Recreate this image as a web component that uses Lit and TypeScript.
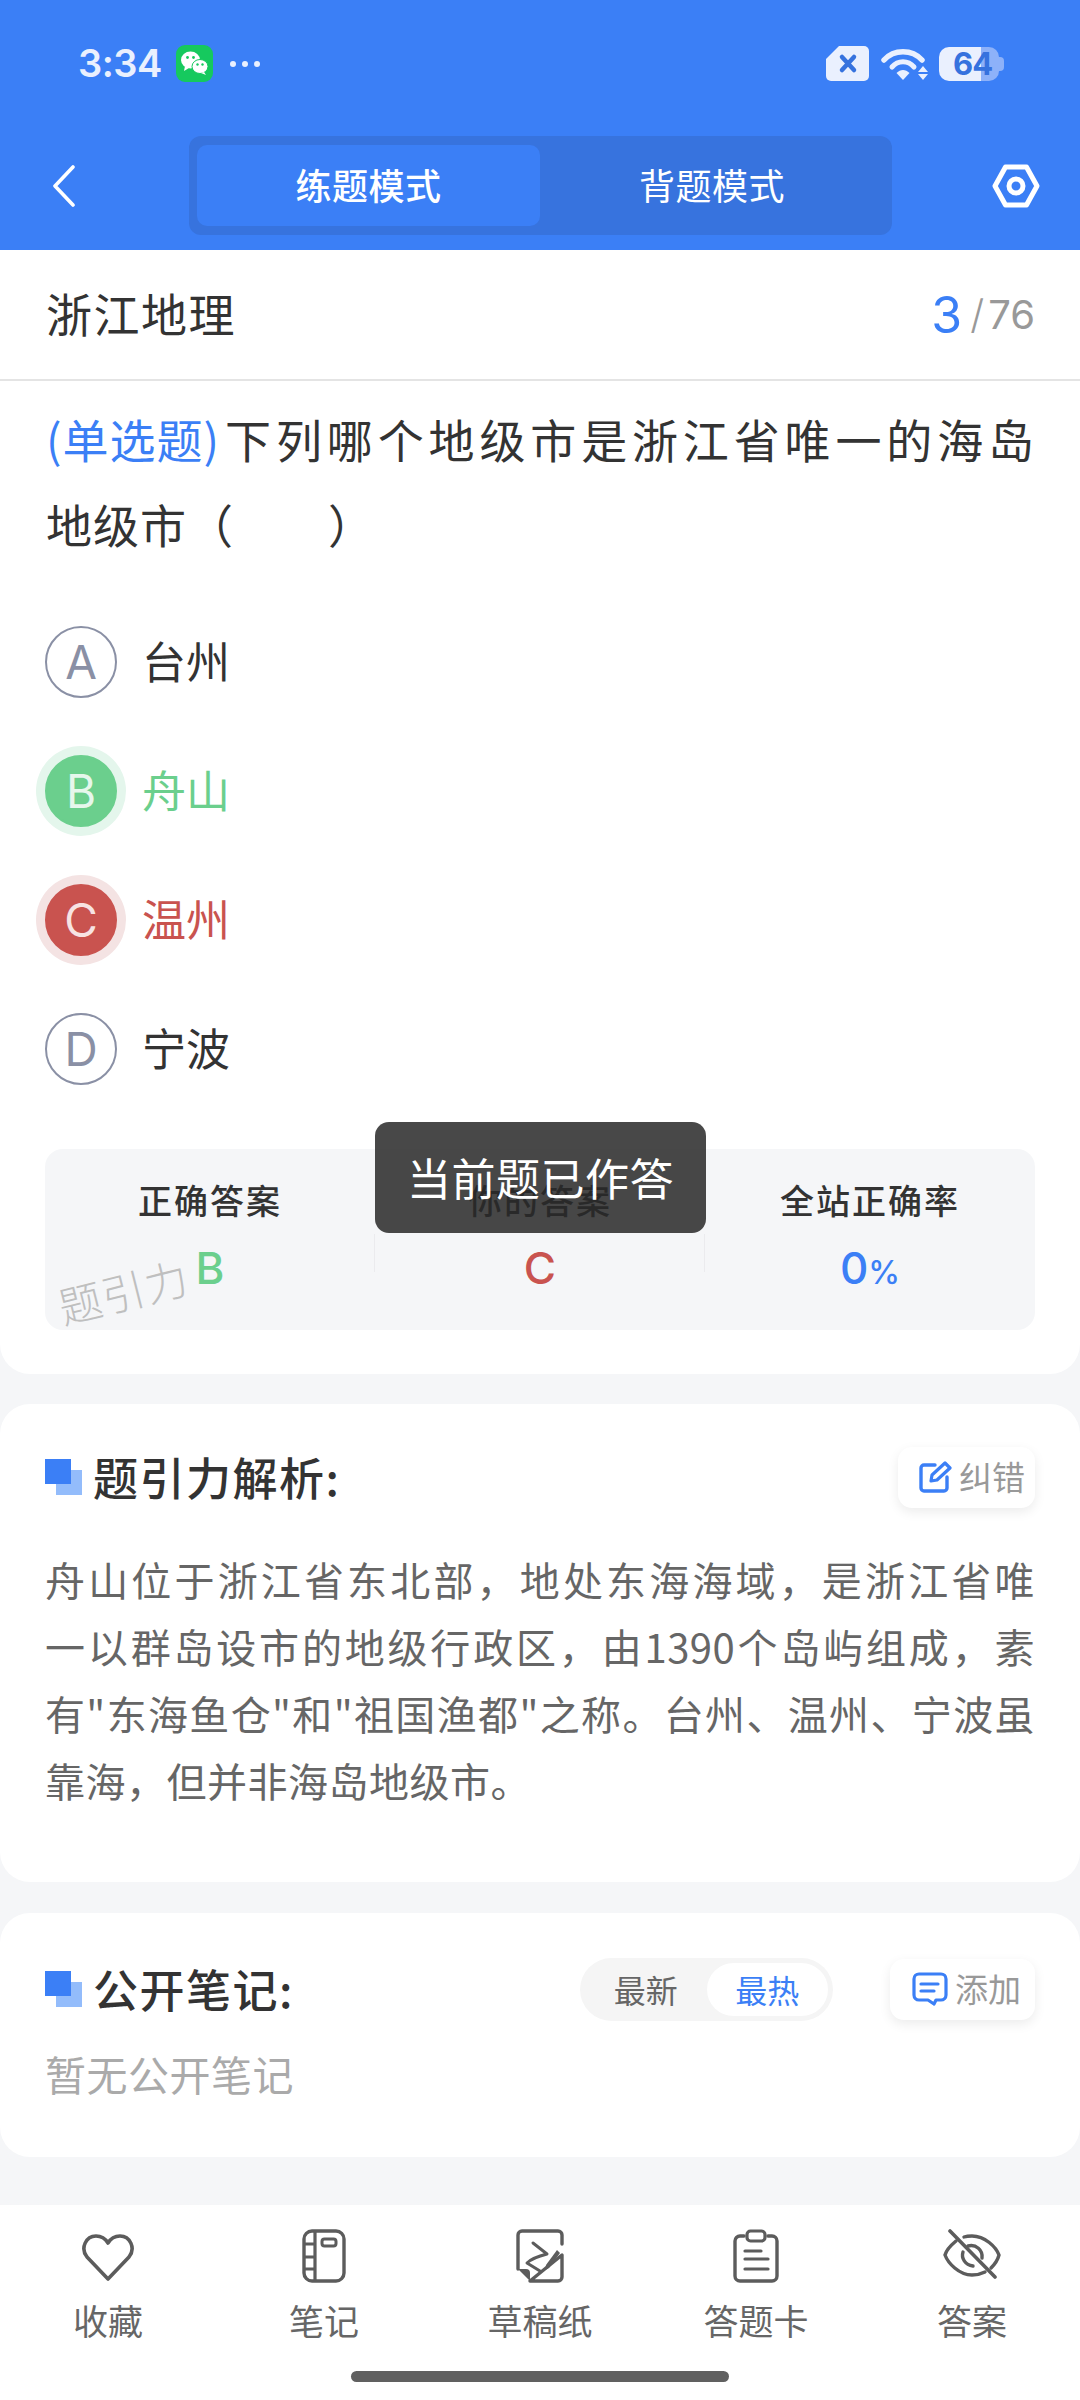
import { LitElement, html, css } from "lit";
import { customElement } from "lit/decorators.js";

const EXP = [
  "舟山位于浙江省东北部，地处东海海域，是浙江省唯",
  "一以群岛设市的地级行政区，由1390个岛屿组成，素",
  '有"东海鱼仓"和"祖国渔都"之称。台州、温州、宁波虽',
];

@customElement("app-root")
export class AppRoot extends LitElement {
  static styles = css`
    :host { display: block; width: 1080px; height: 2400px; font-family: "Noto Sans CJK SC", Inter, sans-serif; color: #333; }
    * { box-sizing: border-box; }
    .page { position: relative; width: 1080px; height: 2400px; background: #f5f6f8; display: flex; flex-direction: column; overflow: hidden; }
    .head { background: #3b7ff6; height: 250px; flex: none; }
    .status { height: 136px; padding: 45px 76px 0 78px; display: flex; justify-content: space-between; align-items: flex-start; color: #eaf0fe; }
    .st-l, .st-r { display: flex; align-items: center; height: 37px; }
    .time { font: 600 38px/37px Inter, sans-serif; width: 98px; letter-spacing: -0.5px; }
    .dots { display: flex; gap: 6px; margin-left: 17px; }
    .dots i { width: 6px; height: 6px; border-radius: 50%; background: #eaf0fe; }
    .wifi { margin: 0 11px 0 12px; }
    .batt { position: relative; width: 65px; height: 34px; display: flex; }
    .batt .fill { width: 42px; background: #eaf0fe; border-radius: 10px 0 0 10px; }
    .batt .rest { width: 18px; background: #8db1f9; border-radius: 0 10px 10px 0; }
    .batt .nub { width: 5px; height: 14px; margin-top: 10px; background: #8db1f9; border-radius: 0 4px 4px 0; }
    .batt span { position: absolute; left: 14px; top: 0; font: 700 31px/34px Inter, sans-serif; color: #3672de; letter-spacing: -1px; }
    .nav { height: 114px; display: flex; align-items: flex-start; padding: 0 40px 0 52px; }
    .back { margin-top: 29px; }
    .tabs { width: 703px; height: 99px; margin-left: 113px; background: #3773de; border-radius: 12px; padding: 9px 8px; display: flex; }
    .tab { width: 343px; height: 81px; border-radius: 10px; display: flex; align-items: center; justify-content: center; color: #fff; font-size: 36px; font-weight: 500; letter-spacing: 0.5px; padding-bottom: 4px; }
    .tab.on { background: #3b7ff6; }
    .tab.off { font-weight: 400; width: 344px; }
    .gear { margin: 28px 0 0 auto; }

    .card { background: #fff; border-radius: 30px; flex: none; }
    .main { border-radius: 0 0 30px 30px; height: 1124px; }
    .title-row { height: 131px; border-bottom: 2px solid #e4e4e4; padding: 0 45px 0 46px; display: flex; align-items: center; justify-content: space-between; }
    .title { font-size: 46px; line-height: 60px; letter-spacing: 1.5px; margin-top: -6px; }
    .count { display: flex; align-items: center; color: #999; font: 400 40px/50px Inter, sans-serif; margin-top: 0; }
    .count b { font-weight: 400; font-size: 50px; color: #3b7ff6; margin-right: 8px; }
    .count i { font-style: normal; margin-right: 4px; font-weight: 300; }
    .q { padding: 15px 45px 0 46px; font-size: 46px; line-height: 85px; letter-spacing: 1px; }
    .q .first { display: flex; }
    .q .first span { flex: none; color: #3b7ff6; letter-spacing: 1px; margin-right: 5px; }
    .q .first div { flex: 1; text-align: justify; text-align-last: justify; }
    .opts { margin-top: 31px; padding-left: 45px; }
    .opt { height: 129px; display: flex; align-items: center; font-size: 44px; gap: 25px; color: #333; }
    .opt span { padding-bottom: 4px; }
    .dot { width: 72px; height: 72px; border-radius: 50%; border: 2px solid #8a90a5; color: #8a90a5; display: flex; align-items: center; justify-content: center; font: 400 46px/1 Inter, sans-serif; flex: none; }
    .opt.ok { color: #6bcf8d; }
    .opt.ok .dot { background: #6bcf8d; border-color: #6bcf8d; color: #e6f7ec; box-shadow: 0 0 0 9px #e4f6ec; }
    .opt.bad { color: #c9534f; }
    .opt.bad .dot { background: #c9534f; border-color: #c9534f; color: #f7e3e3; box-shadow: 0 0 0 9px #f4e3e3; }
    .stats { position: relative; margin: 36px 45px 0; height: 181px; background: #f5f6f8; border-radius: 18px; display: flex; }
    .stat { flex: 1; text-align: center; position: relative; padding-top: 29px; }
    .stat + .stat::before { content: ""; position: absolute; left: -1px; top: 85px; height: 38px; width: 1px; background: #ebebee; }
    .stat .l { font-size: 34px; font-weight: 500; line-height: 44px; letter-spacing: 2px; color: #333; }
    .stat .v { font: 500 44px/50px Inter, sans-serif; margin-top: 21px; }
    .v small { font-size: 32px; font-weight: 500; }
    .g { color: #6bcf8d; } .r { color: #c9534f; } .b { color: #3b7ff6; }
    .mark { position: absolute; left: 12px; top: 116px; font-size: 43px; line-height: 50px; color: #bfbfbf; transform: rotate(-14deg); letter-spacing: 1px; font-weight: 300; }

    .sec { padding: 42px 45px 0; }
    .exp { margin-top: 30px; height: 478px; }
    .notes { margin-top: 31px; height: 244px; padding-top: 45px; }
    .sec-h { display: flex; align-items: center; height: 62px; }
    .sq { position: relative; width: 37px; height: 36px; flex: none; margin-right: 11px; }
    .sq i { position: absolute; display: block; width: 26px; height: 25px; }
    .sq i:first-child { left: 11px; top: 11px; background: #93bcfb; }
    .sq i:last-child { left: 0; top: 0; background: #3b7ff6; }
    .sec-t { font-size: 45px; font-weight: 500; line-height: 60px; letter-spacing: 1.5px; flex: 1; color: #333; }
    .btn { height: 61px; background: #fff; border-radius: 14px; box-shadow: 0 4px 12px rgba(0,0,0,.08); display: flex; align-items: center; gap: 7px; color: #999; font-size: 33px; padding: 0 10px 3px 20px; }
    .btn svg { margin-top: 3px; }
    .btn.fix { width: 137px; }
    .btn.add { width: 145px; padding-left: 22px; }
    .seg { width: 253px; height: 63px; background: #f5f5f5; border-radius: 32px; display: flex; padding: 5px; margin-right: 57px; font-size: 32px; color: #666; }
    .seg div { display: flex; align-items: center; justify-content: center; width: 122px; height: 53px; border-radius: 27px; }
    .seg .on { background: #fff; color: #3b7ff6; }
    .txt { margin-top: 38px; font-size: 40px; line-height: 67px; letter-spacing: 0.5px; color: #666; }
    .txt .j { text-align: justify; text-align-last: justify; }
    .none { margin-top: 23px; font-size: 41px; line-height: 60px; color: #aaa; letter-spacing: 0.5px; }

    .grow { flex: 1; }
    .bar { height: 195px; background: #fff; flex: none; display: flex; padding-top: 24px; position: relative; }
    .it { width: 216px; display: flex; flex-direction: column; align-items: center; color: #666; font-size: 35px; line-height: 44px; }
    .it svg { height: 54px; display: block; margin-bottom: 15px; }
    .home { position: absolute; left: 351px; top: 166px; width: 378px; height: 11px; border-radius: 6px; background: #606060; }
    .toast { position: absolute; left: 375px; top: 1122px; width: 331px; height: 111px; border-radius: 14px; background: rgba(40,40,40,.85); color: #fff; font-size: 44px; display: flex; align-items: center; justify-content: center; padding-bottom: 2px; letter-spacing: 0.5px; }
  `;

  render() {
    return html`<div class="page">
      <div class="head">
        <div class="status">
          <div class="st-l">
            <span class="time">3:34</span>
            <svg width="37" height="37" viewBox="0 0 37 37"><rect width="37" height="37" rx="9" fill="#16c95e"/><ellipse cx="14.5" cy="15" rx="9.5" ry="8.5" fill="#fff"/><path d="M9 21l-1 5 5-3z" fill="#fff"/><ellipse cx="24" cy="21.5" rx="8" ry="7" fill="#fff" stroke="#16c95e" stroke-width="1"/><path d="M28 27l2 3-5-2z" fill="#fff"/><circle cx="11.5" cy="12.5" r="1.4" fill="#16c95e"/><circle cx="17.5" cy="12.5" r="1.4" fill="#16c95e"/><circle cx="21.5" cy="19.5" r="1.2" fill="#16c95e"/><circle cx="26.5" cy="19.5" r="1.2" fill="#16c95e"/></svg>
            <div class="dots"><i></i><i></i><i></i></div>
          </div>
          <div class="st-r">
            <svg width="43" height="35" viewBox="0 0 43 35"><path d="M13 0h25a5 5 0 0 1 5 5v25a5 5 0 0 1-5 5H5a5 5 0 0 1-5-5V13z" fill="#eaf0fe"/><path d="M16 11l12 13M28 11L16 24" stroke="#3672de" stroke-width="4.5" stroke-linecap="round"/></svg>
            <svg class="wifi" width="47" height="34" viewBox="0 0 47 34"><path d="M3 13C13 2 31 2 41 13" fill="none" stroke="#eaf0fe" stroke-width="5.5" stroke-linecap="round"/><path d="M11 20c6-7 16-7 22 0" fill="none" stroke="#eaf0fe" stroke-width="5" stroke-linecap="round"/><path d="M15.5 26c4-4 9-4 13 0l-6.5 7z" fill="#eaf0fe"/><path d="M42 19l5 6H37zM37 27h10l-5 6z" fill="#eaf0fe"/></svg>
            <div class="batt"><div class="fill"></div><div class="rest"></div><div class="nub"></div><span>64</span></div>
          </div>
        </div>
        <div class="nav">
          <svg class="back" width="24" height="42" viewBox="0 0 24 42"><path d="M21 2L3 21l18 19" fill="none" stroke="#fff" stroke-width="3.6" stroke-linecap="round" stroke-linejoin="round"/></svg>
          <div class="tabs"><div class="tab on">练题模式</div><div class="tab off">背题模式</div></div>
          <svg class="gear" width="48" height="44" viewBox="0 0 48 44"><path d="M13.5 3h21L45 22 34.5 41h-21L3 22z" fill="none" stroke="#fff" stroke-width="5" stroke-linejoin="round"/><circle cx="24" cy="22" r="7" fill="none" stroke="#fff" stroke-width="5"/></svg>
        </div>
      </div>

      <div class="card main">
        <div class="title-row"><div class="title">浙江地理</div><div class="count"><b>3</b><i>/</i>76</div></div>
        <div class="q">
          <div class="first"><span>(单选题)</span><div>下列哪个地级市是浙江省唯一的海岛</div></div>
          <div>地级市（　　）</div>
        </div>
        <div class="opts">
          <div class="opt"><div class="dot">A</div><span>台州</span></div>
          <div class="opt ok"><div class="dot">B</div><span>舟山</span></div>
          <div class="opt bad"><div class="dot">C</div><span>温州</span></div>
          <div class="opt"><div class="dot">D</div><span>宁波</span></div>
        </div>
        <div class="stats">
          <div class="stat"><div class="l">正确答案</div><div class="v g">B</div></div>
          <div class="stat"><div class="l">你的答案</div><div class="v r">C</div></div>
          <div class="stat"><div class="l">全站正确率</div><div class="v b">0<small>%</small></div></div>
          <div class="mark">题引力</div>
        </div>
      </div>

      <div class="card sec exp">
        <div class="sec-h">
          <div class="sq"><i></i><i></i></div>
          <div class="sec-t">题引力解析:</div>
          <div class="btn fix">
            <svg width="34" height="34" viewBox="0 0 34 34"><path d="M17 5H6a3 3 0 0 0-3 3v20a3 3 0 0 0 3 3h20a3 3 0 0 0 3-3V17" fill="none" stroke="#3b7ff6" stroke-width="3.4" stroke-linecap="round"/><path d="M13 21l1-6L27 3l5 5-13 12z" fill="none" stroke="#3b7ff6" stroke-width="3.2" stroke-linejoin="round"/></svg>
            纠错
          </div>
        </div>
        <div class="txt">
          ${EXP.map((l) => html`<div class="j">${l}</div>`)}
          <div>靠海，但并非海岛地级市。</div>
        </div>
      </div>

      <div class="card sec notes">
        <div class="sec-h">
          <div class="sq"><i></i><i></i></div>
          <div class="sec-t">公开笔记:</div>
          <div class="seg"><div>最新</div><div class="on">最热</div></div>
          <div class="btn add">
            <svg width="36" height="34" viewBox="0 0 36 34"><path d="M7 2h22a5 5 0 0 1 5 5v16a5 5 0 0 1-5 5h-5l-2 4-6-4H7a5 5 0 0 1-5-5V7a5 5 0 0 1 5-5z" fill="none" stroke="#3b7ff6" stroke-width="3.2" stroke-linejoin="round"/><path d="M9 12h17M9 19h13" stroke="#3b7ff6" stroke-width="3.2" stroke-linecap="round"/></svg>
            添加
          </div>
        </div>
        <div class="none">暂无公开笔记</div>
      </div>

      <div class="grow"></div>

      <div class="bar">
        <div class="it">
          <svg width="54" height="54" viewBox="0 0 54 54"><path d="M27 50L6 28C-1 19 5 7 15 7c5 0 9 2 12 7 3-5 7-7 12-7 10 0 16 12 9 21z" fill="none" stroke="#5c5c5c" stroke-width="3.6" stroke-linejoin="round"/></svg>
          收藏
        </div>
        <div class="it">
          <svg width="44" height="54" viewBox="0 0 44 54"><rect x="2" y="2" width="40" height="50" rx="8" fill="none" stroke="#5c5c5c" stroke-width="3.4"/><path d="M13 2v50M2 15h11M2 28h11M2 40h11" stroke="#5c5c5c" stroke-width="3.2"/><rect x="20" y="10" width="14" height="7" rx="2.5" fill="none" stroke="#5c5c5c" stroke-width="3"/></svg>
          笔记
        </div>
        <div class="it">
          <svg width="48" height="54" viewBox="0 0 48 54"><path d="M2 40V6a4 4 0 0 1 4-4h36a4 4 0 0 1 4 4v9M46 26v22a4 4 0 0 1-4 4H14z" fill="none" stroke="#5c5c5c" stroke-width="3.4" stroke-linejoin="round" stroke-linecap="round"/><path d="M2 40h8a4 4 0 0 1 4 4v8z" fill="#5c5c5c"/><path d="M17 14l14 11c-8 2-16 5-20 9l13 8" fill="none" stroke="#5c5c5c" stroke-width="3" stroke-linecap="round" stroke-linejoin="round"/><path d="M30 36l11-15 3 3-11 15-4 2z" fill="#5c5c5c"/></svg>
          草稿纸
        </div>
        <div class="it">
          <svg width="46" height="54" viewBox="0 0 46 54"><path d="M11 7H7a5 5 0 0 0-5 5v35a5 5 0 0 0 5 5h32a5 5 0 0 0 5-5V12a5 5 0 0 0-5-5h-4" fill="none" stroke="#5c5c5c" stroke-width="3.4" stroke-linecap="round"/><rect x="14" y="2" width="18" height="10" rx="3.5" fill="none" stroke="#5c5c5c" stroke-width="3.2"/><path d="M12 22h16M12 30h23M12 40h23" stroke="#5c5c5c" stroke-width="3.2" stroke-linecap="round"/></svg>
          答题卡
        </div>
        <div class="it">
          <svg width="58" height="54" viewBox="0 0 58 54"><path d="M7 2l45 46" stroke="#5c5c5c" stroke-width="3.6" stroke-linecap="round"/><path d="M13 12C7 17 3 22 2 26c3 8 14 20 27 20 5 0 9-1 13-3M21 8c3-1 5-1 8-1 13 0 24 11 27 19-1 4-4 9-8 13" fill="none" stroke="#5c5c5c" stroke-width="3.4" stroke-linecap="round"/><path d="M20 23c-2 6 2 13 10 14M25 17c8-2 15 4 14 12" fill="none" stroke="#5c5c5c" stroke-width="3.4" stroke-linecap="round"/></svg>
          答案
        </div>
        <div class="home"></div>
      </div>

      <div class="toast">当前题已作答</div>
    </div>`;
  }
}
